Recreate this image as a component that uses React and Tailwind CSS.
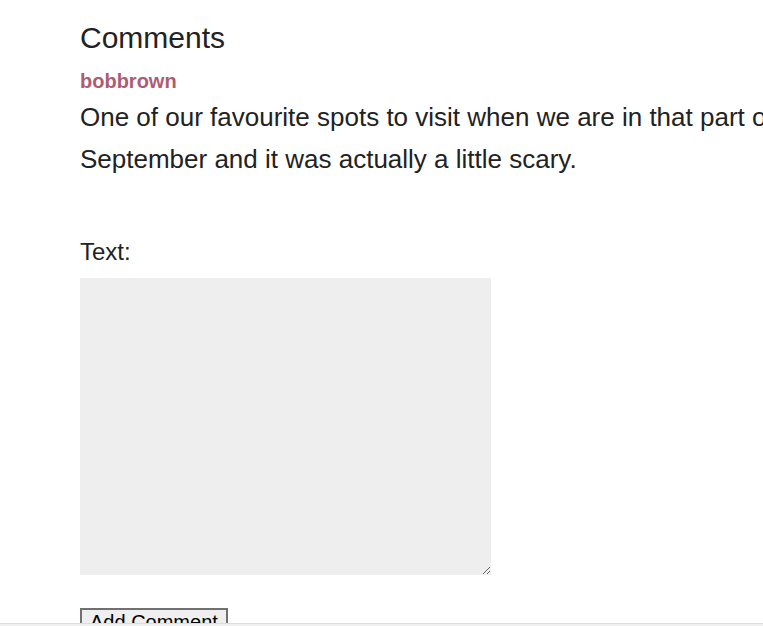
export default function App() {
  return (
    <div className="min-h-screen bg-white overflow-hidden" style={{ fontFamily: '"Liberation Sans", Arial, sans-serif' }}>
      <div className="pl-[80px] pt-[20px] w-[1100px] text-[#222222]">
        <h2 className="text-[30px] leading-[36px] font-normal">Comments</h2>
        <div className="mt-[13px] text-[20px] leading-[24px] font-bold text-[#ad5c72]">bobbrown</div>
        <p className="mt-[3px] text-[26px] leading-[42px]">
          <span className="whitespace-nowrap">One of our favourite spots to visit when we are in that part of the country. We went in</span>
          <br />
          September and it was actually a little scary.
        </p>
        <div className="mt-[57px] text-[24px] leading-[30px]">Text:</div>
        <textarea className="mt-[11px] block w-[411px] h-[297px] bg-[#eeeeee] border-0 outline-none" />
        <button className="mt-[33px] block border-2 border-[#707070] bg-[#efefef] px-[8px] text-[20px] leading-[24px] text-black">
          Add Comment
        </button>
      </div>
      <div className="fixed bottom-0 left-0 right-0 h-[3px] bg-[#f0f0f0] border-t border-[#dcdcdc]" />
    </div>
  );
}
